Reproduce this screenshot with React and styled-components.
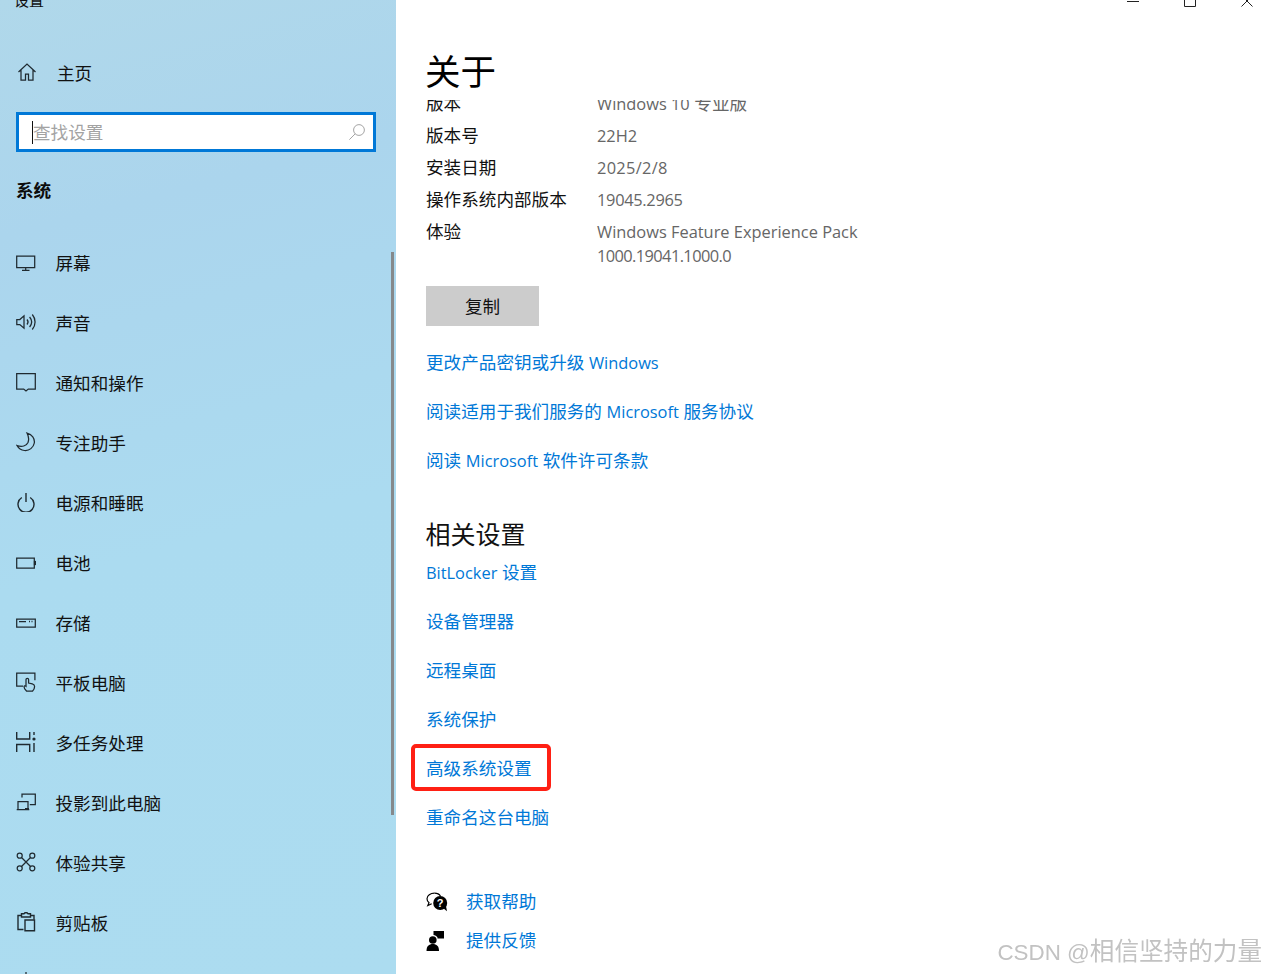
import React from "react";
import styled, { createGlobalStyle } from "styled-components";

const Global = createGlobalStyle`
  html, body { margin: 0; padding: 0; height: 974px; overflow: hidden; background: #fff; }
  body { font-family: "Open Sans", "Noto Sans CJK SC", sans-serif; }
  #root { height: 974px; }
`;

const Window = styled.div`display: flex; width: 1266px; height: 974px; overflow: hidden; position: relative; background: #fff;`;
const Sidebar = styled.aside`
  position: relative; flex: 0 0 396px; height: 974px; overflow: hidden;
  display: flex; flex-direction: column;
  background: linear-gradient(165deg, #b0d8ea 0%, #abd5ed 22%, #abdbf0 55%, #acdcf0 100%);
  color: #111;
  & > * { flex-shrink: 0; }
`;
const AppTitle = styled.div`
  height: 9px; padding-left: 14px; display: flex; align-items: flex-end; overflow: hidden;
  font-size: 15px; line-height: 18px;
`;
const HomeRow = styled.div`
  box-sizing: border-box; height: 40px; margin-top: 44px; padding: 0 0 2px 17px; display: flex; align-items: center; gap: 20px; font-size: 17.6px;
`;
const SearchBox = styled.div`
  box-sizing: border-box; width: 360px; height: 40px; margin: 19px 0 0 16px; border: 3px solid #0078d7; background: #fff;
  display: flex; align-items: center; padding: 0 7px 0 13px; color: #a3a3a3; font-size: 17.6px;
`;
const Caret = styled.span`flex: 0 0 1px; height: 23px; background: #111;`;
const SearchText = styled.span`flex: 1; margin-bottom: 2px;`;
const SectionName = styled.div`
  height: 30px; margin: 24px 0 0 16px; line-height: 28px; font-size: 17.6px; font-weight: 700; color: #0c0c0c;
`;
const Nav = styled.nav`display: flex; flex-direction: column; margin-top: 27px;`;
const NavRow = styled.div`
  box-sizing: border-box; flex: 0 0 60px; height: 60px; padding: 0 0 2px 16px; display: flex; align-items: center; gap: 20px; font-size: 17.6px;
  & > span { margin-left: -0.5px; }
`;
const Thumb = styled.div`position: absolute; left: 391px; top: 252px; width: 3px; height: 563px; background: #85898c;`;

const Main = styled.main`flex: 1; display: flex; flex-direction: column; padding-left: 30px; position: relative;`;
const CaptionBar = styled.div`
  height: 7px; overflow: hidden; margin-left: -30px; padding-right: 13px; flex-shrink: 0;
  display: flex; justify-content: flex-end; align-items: flex-end; gap: 45px;
`;
const Title = styled.h1`
  margin: 40px 0 3px -1px; height: 50px; line-height: 48px; font-size: 35.500px; font-weight: 400; color: #000; flex-shrink: 0;
`;
const InfoClip = styled.div`overflow: hidden; height: 172px; flex-shrink: 0;`;
const InfoRows = styled.div`margin-top: -13px;`;
const InfoRow = styled.div`
  display: grid; grid-template-columns: 171px 1fr; padding: 4px 0; line-height: 24px; font-size: 17.6px; color: #111;
`;
const Value = styled.div`color: #666;`;
const ValueLine = styled.div`letter-spacing: ${(p) => p.$track || 0}px;`;
const CopyButton = styled.div`
  width: 113px; height: 40px; margin-top: 14px; background: #ccc; color: #111; font-size: 17.6px; line-height: 40px;
  text-align: center; flex-shrink: 0;
`;
const LinkGroup = styled.div`display: flex; flex-direction: column; gap: 22px; margin-top: ${(p) => p.$top}px;`;
const LinkText = styled.a`
  position: relative; display: block; height: 27px; line-height: 25px; font-size: 17.6px; color: #0078d7; text-decoration: none;
  ${(p) => p.$boxed && `
    &::after {
      content: ""; position: absolute; left: -15px; top: -12px; width: 132px; height: 39px;
      border: 4px solid #ff2014; border-radius: 5px;
    }
  `}
`;
const SectionTitle = styled.h2`
  margin: 42px 0 0 -0.5px; height: 36px; line-height: 34px; font-size: 25px; font-weight: 400; color: #111; flex-shrink: 0;
`;
const HelpList = styled.div`display: flex; flex-direction: column; gap: 12px; margin-top: 56px;`;
const HelpRow = styled.div`display: grid; grid-template-columns: 40px 1fr; align-items: center; height: 27px; line-height: 25px; font-size: 17.6px; color: #0078d7;`;
const Latin = styled.span`font-size: ${(p) => p.$size || 16.4}px; line-height: 1;`;
const Watermark = styled.div`
  position: absolute; right: 4px; top: 936px; font-family: "Liberation Sans", "Noto Sans CJK SC", sans-serif;
  font-size: 24.6px; line-height: 32px; color: #c2c2c2; white-space: nowrap; filter: blur(0.4px);
`;
const Svg = styled.svg`
  flex: 0 0 auto; display: block; width: ${(p) => p.$w || 20}px; height: ${(p) => p.$w || 20}px;
  fill: none; stroke: ${(p) => p.$c || "#1f2a30"}; stroke-width: ${(p) => p.$sw || 1.25};
`;

const Mixed = ({ text }) => (
  <>
    {text.split(/([A-Za-z0-9./]+(?: [A-Za-z0-9./]+)*)/).map((part, i) =>
      i % 2 ? <Latin key={i}>{part}</Latin> : part
    )}
  </>
);

const I = ({ children, ...p }) => <Svg viewBox="0 0 20 20" {...p}>{children}</Svg>;
const Home = () => <I><path d="M1.500 10 10 2l8.500 8M4 8v10h4.500v-6h3v6H16V8" /></I>;
const Display = () => <I><path d="M.7 4h18v11.500H.7zM9.700 15.500v3M6 18.300h7.500" /></I>;
const Sound = () => <I><path d="M.8 7.500h3L8 3.800v12.400l-4.200-3.700h-3zM11 7.500c1.300 1.500 1.300 3.500 0 5M13.600 5c2.500 3 2.500 7 0 10M16.300 2.500c3.700 4.500 3.700 10.500 0 15" /></I>;
const Notice = () => <I><path d="M.7 1.500h18.600v15.500h-7L10 19l-2.300-2H.7z" /></I>;
const Moon = () => <I><path d="M11 1c5 1.500 8 5.500 7.300 10-.8 4.500-5 8-9.800 7.500-3-.3-6-2.200-7.500-5 5 2 9.500.3 11-3 1.200-3 .5-6.500-1-9.500z" /></I>;
const Power = () => <I $sw={1.4}><path d="M10 1v9M5.800 5.500a8 8 0 1 0 8.400 0" /></I>;
const Battery = () => <I><path d="M.7 6h17.600v10H.7z" /><path d="M18.500 9.500h1.200v3h-1.200z" fill="#1f2a30" /></I>;
const Storage = () => <I><path d="M.7 7h18.600v8H.7zM3 9.500h7" /><path d="M13 9.500h1M15.500 9.500h1" strokeWidth="1.600" /></I>;
const Tablet = () => <I><path d="M7 14H.7V1.200h18.200v7" /><path d="M10.500 19c-1.300-1.300-2.500-2.800-2.500-4.200 0-1 1-1.400 2-.6V7.500c0-1.600 2.600-1.600 2.600 0v3.500l3.700.8c1.200.3 2.300 1 2.300 2.700 0 2-1 3.500-2 4.500z" fill="#acdaef" /></I>;
const Multi = () => <I $sw={1.4}><path d="M.7 0v7h13V0M.7 20v-7.500h13V20M18 0v3M18 11v9" /><circle cx="18" cy="7" r="1.600" fill="#1f2a30" stroke="none" /></I>;
const Project = () => <I><path d="M6 5.500V2.200h13.300v10.500h-5.500M9 16.500h4M.7 17.700h12.600M2 17.500v-8h10v8" /></I>;
const Share = () => <I><circle cx="3.700" cy="3.700" r="2.500" /><circle cx="16.300" cy="3.700" r="2.500" /><circle cx="3.700" cy="16.300" r="2.500" /><circle cx="16.300" cy="16.300" r="2.500" /><path d="m5.500 5.500 9 9M14.500 5.500l-9 9" /></I>;
const Clip = () => <I $sw={1.4}><path d="M7.500 17.500H2V3.500h3.500M14.500 3.500h3.500v4" /><path d="M5.500 3V1.800H8L9 .8h2l1 1h2.500V5h-9z" /><path d="M9 8h9.500v10.800H9z" /></I>;
const Remote = () => <I><path d="M10 0v3" /></I>;

const SearchIcon = () => (
  <Svg viewBox="0 0 20 20" $w={18} $c="#a2a2a2" $sw={1.100}>
    <circle cx="12.200" cy="7.800" r="6" />
    <path d="M8 12 1.500 18.500" />
  </Svg>
);
const HelpIcon = () => (
  <Svg viewBox="0 0 22 20" $w={22} $c="#000" $sw={1.200}>
    <path d="M8.500 1.200C4.500 1.200 1 3.500 1 6.800c0 1.600.7 2.900 2 3.900L1.800 13.500l3.900-1.700" />
    <path d="M8.500 1.200c2.700 0 5 1.300 6 3" />
    <circle cx="14.200" cy="11" r="7" fill="#000" stroke="none" />
    <path d="m17 16 4 3.200-1-5z" fill="#000" stroke="none" />
    <text x="14.200" y="15" textAnchor="middle" fontSize="11" fontWeight="700" fill="#fff" stroke="none" fontFamily="Liberation Sans">?</text>
  </Svg>
);
const FeedbackIcon = () => (
  <Svg viewBox="0 0 20 20" $w={20} $c="#000">
    <circle cx="6.800" cy="9" r="3.800" fill="#000" stroke="none" />
    <path d="M.5 20c0-5 2.500-7 6.300-7s6.200 2 6.200 7z" fill="#000" stroke="none" />
    <path d="M7.500 0H18v7.500H11.500v-1c-1-1.600-2.400-2.300-4-2.500z" fill="#000" stroke="none" />
  </Svg>
);
const Minimize = () => <Svg viewBox="0 0 12 12" $w={12} $c="#222" $sw={1}><path d="M0 6.500h12" /></Svg>;
const Maximize = () => <Svg viewBox="0 0 12 12" $w={12} $c="#222" $sw={1}><path d="M.5.500h11v11H.5z" /></Svg>;
const Close = () => <Svg viewBox="0 0 12 12" $w={12} $c="#222" $sw={1}><path d="m.5.500 11 11M11.500.500l-11 11" /></Svg>;

const nav = [
  [Display, "屏幕"], [Sound, "声音"], [Notice, "通知和操作"], [Moon, "专注助手"], [Power, "电源和睡眠"],
  [Battery, "电池"], [Storage, "存储"], [Tablet, "平板电脑"], [Multi, "多任务处理"], [Project, "投影到此电脑"],
  [Share, "体验共享"], [Clip, "剪贴板"], [Remote, "远程桌面"],
];
const info = [
  ["版本", [["Windows 10 专业版", 0]]],
  ["版本号", [["22H2", 0]]],
  ["安装日期", [["2025/2/8", 0.3]]],
  ["操作系统内部版本", [["19045.2965", -0.3]]],
  ["体验", [["Windows Feature Experience Pack", 0], ["1000.19041.1000.0", -0.6]]],
];
const topLinks = ["更改产品密钥或升级 Windows", "阅读适用于我们服务的 Microsoft 服务协议", "阅读 Microsoft 软件许可条款"];
const related = ["BitLocker 设置", "设备管理器", "远程桌面", "系统保护", "高级系统设置", "重命名这台电脑"];

export default function App() {
  return (
    <Window>
      <Global />
      <Sidebar>
        <AppTitle>设置</AppTitle>
        <HomeRow><Home />主页</HomeRow>
        <SearchBox><Caret /><SearchText>查找设置</SearchText><SearchIcon /></SearchBox>
        <SectionName>系统</SectionName>
        <Nav>
          {nav.map(([Icon, label]) => <NavRow key={label}><Icon /><span>{label}</span></NavRow>)}
        </Nav>
        <Thumb />
      </Sidebar>
      <Main>
        <CaptionBar><Minimize /><Maximize /><Close /></CaptionBar>
        <Title>关于</Title>
        <InfoClip>
          <InfoRows>
            {info.map(([k, v]) => (
              <InfoRow key={k}>
                <div>{k}</div>
                <Value>{v.map(([l, t]) => <ValueLine key={l} $track={t}><Mixed text={l} /></ValueLine>)}</Value>
              </InfoRow>
            ))}
          </InfoRows>
        </InfoClip>
        <CopyButton>复制</CopyButton>
        <LinkGroup $top={24}>{topLinks.map((l) => <LinkText key={l}><Mixed text={l} /></LinkText>)}</LinkGroup>
        <SectionTitle>相关设置</SectionTitle>
        <LinkGroup $top={7}>{related.map((l) => <LinkText key={l} $boxed={l === "高级系统设置"}><Mixed text={l} /></LinkText>)}</LinkGroup>
        <HelpList>
          <HelpRow><HelpIcon /><span>获取帮助</span></HelpRow>
          <HelpRow><FeedbackIcon /><span>提供反馈</span></HelpRow>
        </HelpList>
      </Main>
      <Watermark><Latin $size={22.4}>CSDN @</Latin>相信坚持的力量</Watermark>
    </Window>
  );
}
